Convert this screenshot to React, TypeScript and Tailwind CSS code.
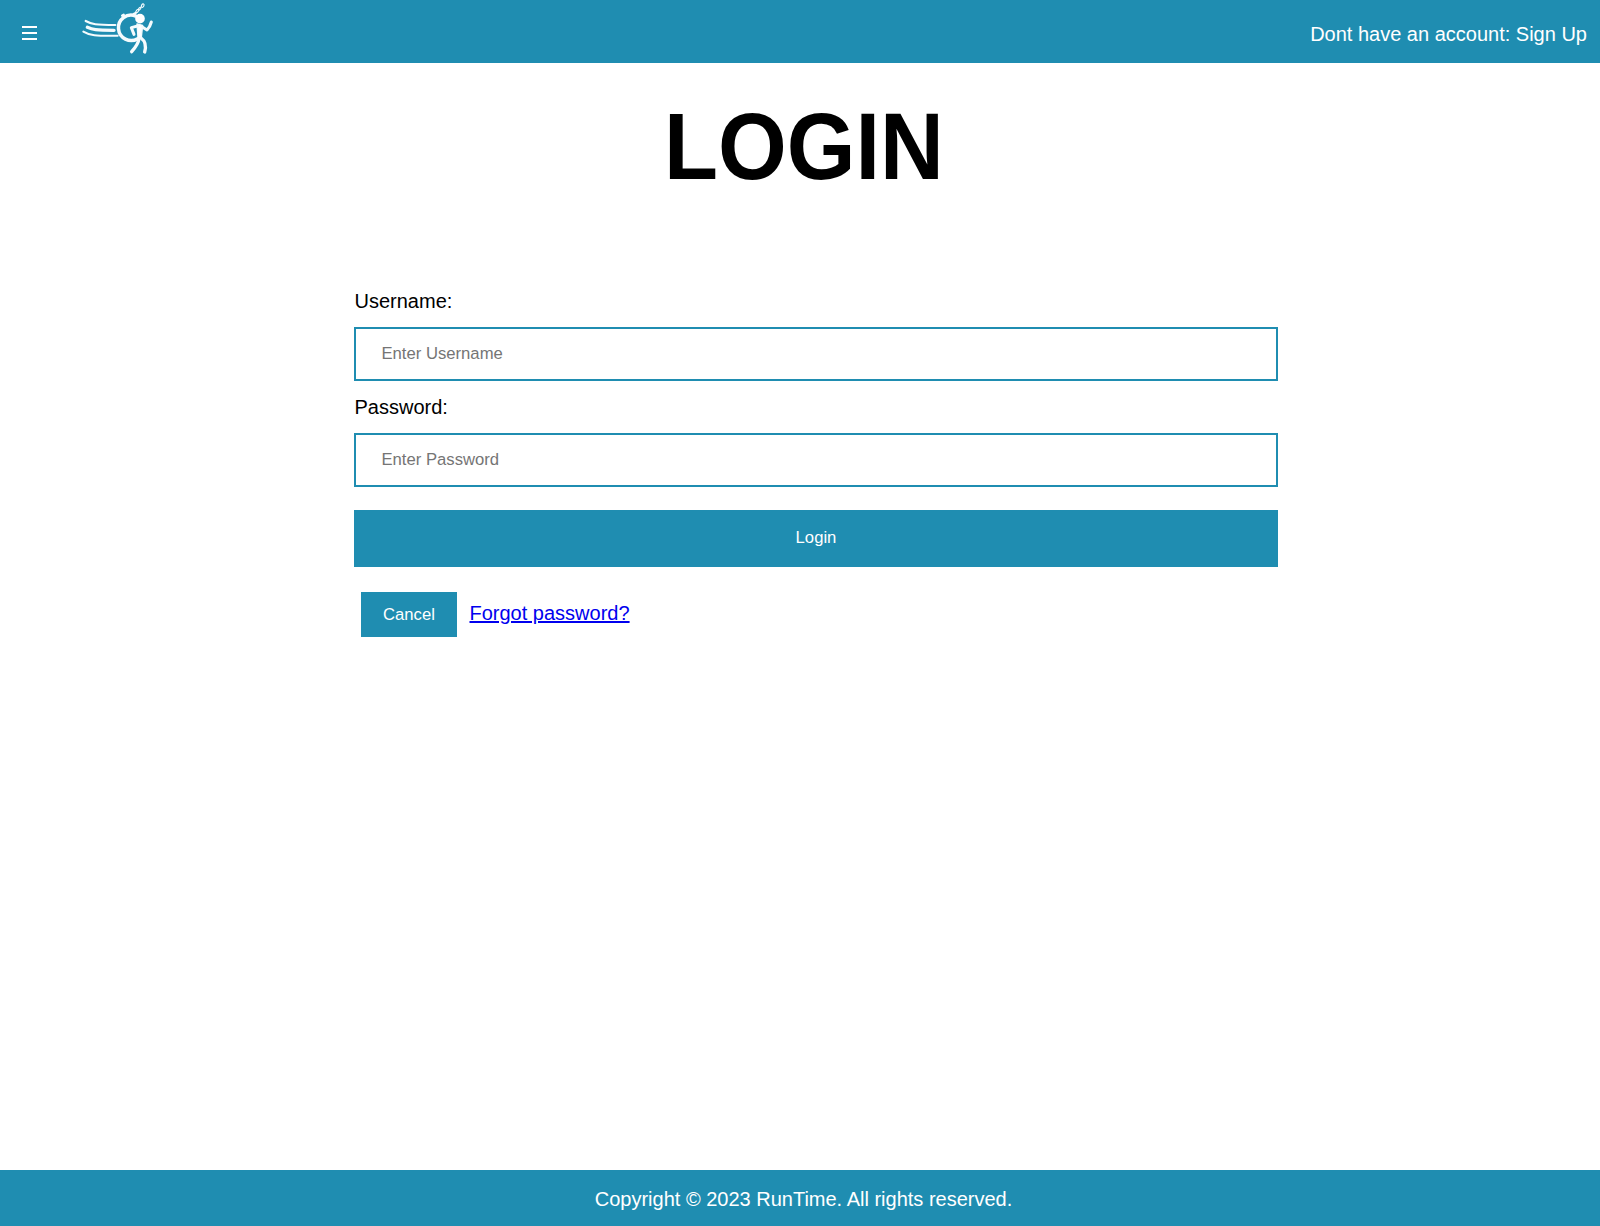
import React from "react";

function RunnerLogo() {
  return (
    <svg
      className="h-[60px] w-[85px]"
      viewBox="0 0 255 180"
      fill="none"
      stroke="#f4fbfd"
      strokeLinecap="round"
      strokeLinejoin="round"
      aria-label="RunTime"
    >
      <path d="M32 63C50 73 62 75 121 75" strokeWidth="6.500" />
      <path d="M37 82C52 89 62 91 117 91" strokeWidth="10" />
      <path d="M25 95C42 106 62 108 128 107" strokeWidth="6" />
      <path d="M182 48A38 38 0 1 0 188 116" strokeWidth="10.500" />
      <path d="M142 47L146 45" strokeWidth="8" />
      <path d="M176 42L182 39" strokeWidth="7" />
      <ellipse cx="187" cy="33" rx="6" ry="3" transform="rotate(-50 187 33)" strokeWidth="3.500" />
      <ellipse cx="194" cy="26" rx="5" ry="2.500" transform="rotate(-50 194 26)" strokeWidth="3.500" />
      <ellipse cx="203" cy="17" rx="5.500" ry="3.500" transform="rotate(-60 203 17)" strokeWidth="3.500" />
      <circle cx="195" cy="56" r="14.500" fill="#fff" stroke="none" />
      <path d="M186 72L203 76L199 112L189 114Z" fill="#fff" strokeWidth="4" />
      <path d="M188 78L169 83L177 103" strokeWidth="9" />
      <path d="M203 82L216 90Q225 81 229 66" strokeWidth="9" />
      <path d="M192 116Q190 133 170 155" strokeWidth="10" />
      <path d="M198 114Q217 128 209 156" strokeWidth="10" />
    </svg>
  );
}

function Field({ id, label, type, placeholder }: { id: string; label: string; type: string; placeholder: string }) {
  return (
    <div className="h-[106px]">
      <label htmlFor={id} className="block h-10 pl-[0.5px] text-xl leading-7">
        {label}
      </label>
      <input
        id={id}
        type={type}
        placeholder={placeholder}
        className="block h-[54px] w-full border-2 border-[#1f8db1] pr-[25px] pb-px pl-[25.5px] text-[16.667px] outline-none placeholder:text-[#757575]"
      />
    </div>
  );
}

export default function App() {
  return (
    <div className="flex h-[1226px] flex-col bg-white font-['Liberation_Sans',Arial,sans-serif] text-xl text-black">
      <header className="flex h-[63px] shrink-0 items-start bg-[#1f8db1] pr-[13px] pl-5 text-white">
        <button type="button" aria-label="Menu" className="mt-[26px] flex w-[18px] flex-col items-center gap-1">
          <span className="h-[2px] w-[15px] bg-white" />
          <span className="h-[2px] w-[15px] bg-white" />
          <span className="h-[2px] w-[15px] bg-white" />
        </button>
        <div className="ml-[37px]">
          <RunnerLogo />
        </div>
        <a href="#" className="mt-5 ml-auto leading-7">
          Dont have an account: Sign Up
        </a>
      </header>

      <main className="flex-1">
        <h1 className="mt-[33px] mr-[-7px] h-[191px] text-center text-[89px] leading-[100px] font-bold">
          <span className="inline-block origin-center scale-x-[0.993] scale-y-[1.055]">LOGIN</span>
        </h1>
        <form className="ml-[354px] w-[924px]">
          <Field id="username" label="Username:" type="text" placeholder="Enter Username" />
          <Field id="password" label="Password:" type="password" placeholder="Enter Password" />
          <button type="button" className="mt-[11px] block h-[57px] w-full bg-[#1f8db1] pb-[2px] text-[16.667px] text-white">
            Login
          </button>
          <div className="mt-[25px] ml-[7px] flex">
            <button type="button" className="h-[45px] w-24 bg-[#1f8db1] text-[16.667px] text-white">
              Cancel
            </button>
            <a href="#" className="mt-[7px] ml-[12.5px] leading-7 text-[#0000ee] underline">
              Forgot password?
            </a>
          </div>
        </form>
      </main>

      <footer className="h-14 shrink-0 bg-[#1f8db1] pt-[15px] pl-[7px] text-center leading-7 text-white">
        Copyright © 2023 RunTime. All rights reserved.
      </footer>
    </div>
  );
}
